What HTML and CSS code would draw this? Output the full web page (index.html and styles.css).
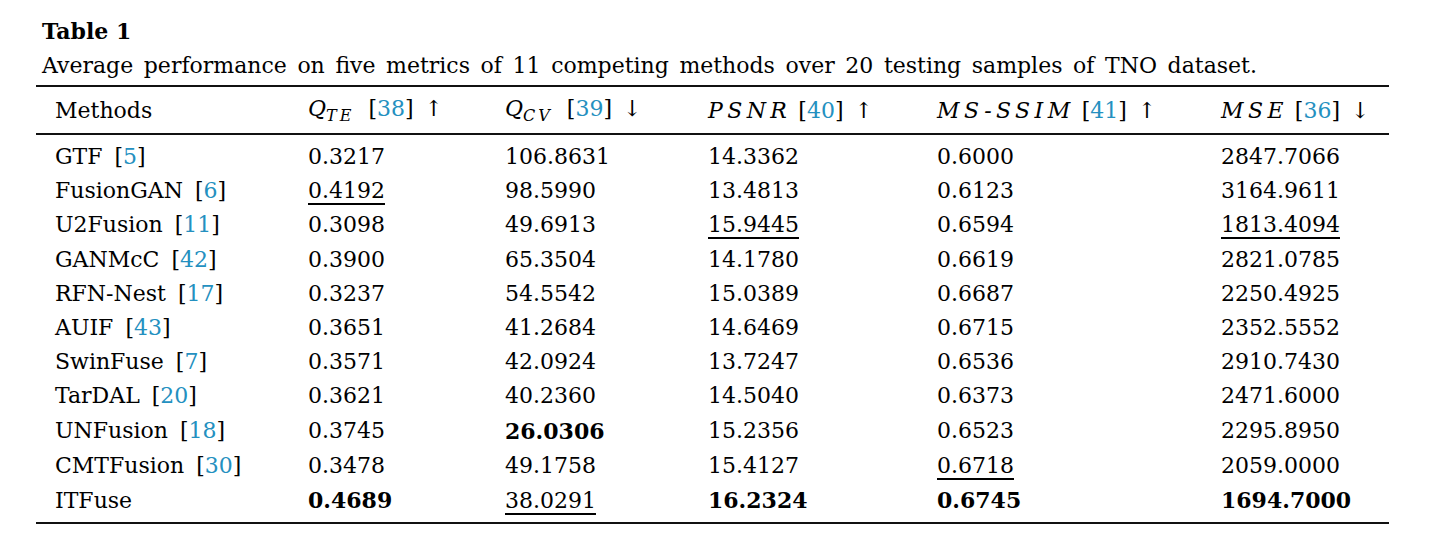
FILE: index.html
```html
<!DOCTYPE html>
<html lang="en">
<head>
<meta charset="utf-8">
<title>Table 1</title>
<link rel="stylesheet" href="styles.css">
</head>
<body>
<div class="page">
  <div class="table-title">Table 1</div>
  <div class="table-caption">Average performance on five metrics of 11 competing methods over 20 testing samples of TNO dataset.</div>
  <table class="results">
    <colgroup>
      <col class="c1"><col class="c2"><col class="c3"><col class="c4"><col class="c5"><col class="c6">
    </colgroup>
    <thead>
      <tr>
        <th>Methods</th>
        <th><span class="math">Q<sub>TE</sub></span><span class="ref">[<a>38</a>]</span><span class="arrow">↑</span></th>
        <th><span class="math">Q<sub>CV</sub></span><span class="ref">[<a>39</a>]</span><span class="arrow">↓</span></th>
        <th><span class="math spaced">PSNR</span><span class="ref">[<a>40</a>]</span><span class="arrow">↑</span></th>
        <th><span class="math spaced">MS-SSIM</span><span class="ref">[<a>41</a>]</span><span class="arrow">↑</span></th>
        <th><span class="math spaced">MSE</span><span class="ref">[<a>36</a>]</span><span class="arrow">↓</span></th>
      </tr>
    </thead>
    <tbody>
      <tr><td>GTF<span class="ref">[<a>5</a>]</span></td><td>0.3217</td><td>106.8631</td><td>14.3362</td><td>0.6000</td><td>2847.7066</td></tr>
      <tr><td>FusionGAN<span class="ref">[<a>6</a>]</span></td><td><u>0.4192</u></td><td>98.5990</td><td>13.4813</td><td>0.6123</td><td>3164.9611</td></tr>
      <tr><td>U2Fusion<span class="ref">[<a>11</a>]</span></td><td>0.3098</td><td>49.6913</td><td><u>15.9445</u></td><td>0.6594</td><td><u>1813.4094</u></td></tr>
      <tr><td>GANMcC<span class="ref">[<a>42</a>]</span></td><td>0.3900</td><td>65.3504</td><td>14.1780</td><td>0.6619</td><td>2821.0785</td></tr>
      <tr><td>RFN-Nest<span class="ref">[<a>17</a>]</span></td><td>0.3237</td><td>54.5542</td><td>15.0389</td><td>0.6687</td><td>2250.4925</td></tr>
      <tr><td>AUIF<span class="ref">[<a>43</a>]</span></td><td>0.3651</td><td>41.2684</td><td>14.6469</td><td>0.6715</td><td>2352.5552</td></tr>
      <tr><td>SwinFuse<span class="ref">[<a>7</a>]</span></td><td>0.3571</td><td>42.0924</td><td>13.7247</td><td>0.6536</td><td>2910.7430</td></tr>
      <tr><td>TarDAL<span class="ref">[<a>20</a>]</span></td><td>0.3621</td><td>40.2360</td><td>14.5040</td><td>0.6373</td><td>2471.6000</td></tr>
      <tr><td>UNFusion<span class="ref">[<a>18</a>]</span></td><td>0.3745</td><td><b>26.0306</b></td><td>15.2356</td><td>0.6523</td><td>2295.8950</td></tr>
      <tr><td>CMTFusion<span class="ref">[<a>30</a>]</span></td><td>0.3478</td><td>49.1758</td><td>15.4127</td><td><u>0.6718</u></td><td>2059.0000</td></tr>
      <tr><td>ITFuse</td><td><b>0.4689</b></td><td><u>38.0291</u></td><td><b>16.2324</b></td><td><b>0.6745</b></td><td><b>1694.7000</b></td></tr>
    </tbody>
  </table>
</div>
</body>
</html>
```

FILE: styles.css
```css
html, body {
  margin: 0;
  padding: 0;
  background: #ffffff;
}

body {
  font-family: "DejaVu Serif", "Liberation Serif", serif;
  color: #000000;
  font-size: 22px;
}

.page {
  width: 1353px;
  padding: 14px 0 0 36px;
}

.table-title {
  font-weight: bold;
  line-height: 34px;
  padding-left: 6px;
}

.table-caption {
  line-height: 35px;
  padding-left: 6px;
  word-spacing: 3.6px;
  margin-bottom: 2px;
}

.results {
  width: 1353px;
  border-collapse: collapse;
  table-layout: fixed;
  border-top: 2px solid #111;
  border-bottom: 2px solid #111;
}

.c1 { width: 253px; }
.c2 { width: 197px; }
.c3 { width: 203px; }
.c4 { width: 229px; }
.c5 { width: 284px; }
.c6 { width: 187px; }

.results th,
.results td {
  text-align: left;
  padding: 0 0 0 19px;
  white-space: nowrap;
  font-weight: normal;
}

.results th {
  height: 45px;
  padding-top: 1px;
  border-bottom: 2px solid #111;
}

.results td {
  height: 34.2px;
  line-height: 34.2px;
}

.results td .ref {
  margin-left: 12px;
}

.results tbody tr:first-child td {
  padding-top: 5px;
}

.results tbody tr:last-child td {
  padding-bottom: 4px;
}

.math {
  font-style: italic;
  margin-right: 14px;
}

.math sub {
  font-size: 16px;
  vertical-align: -5px;
  letter-spacing: 3px;
}

.spaced {
  letter-spacing: 4.4px;
  margin-right: 7px;
}

.arrow {
  margin-left: 11px;
}

.ref a {
  color: #2490c0;
}

.results b {
  font-weight: bold;
}

.results u {
  text-decoration: underline;
  text-decoration-thickness: 2px;
  text-underline-offset: 5px;
}
```
